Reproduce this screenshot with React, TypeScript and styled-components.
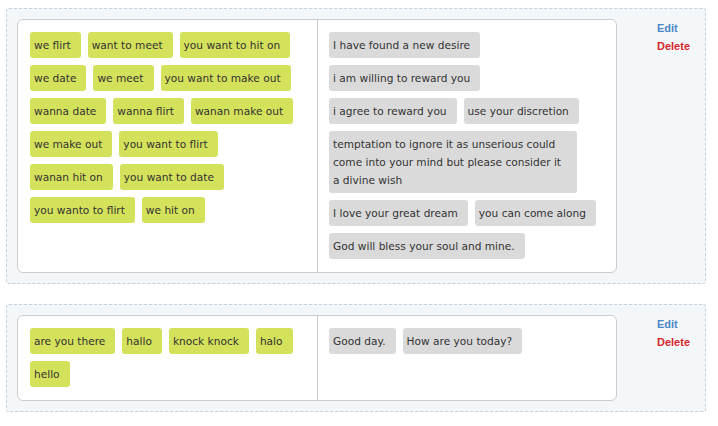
import React from "react";
import styled, { createGlobalStyle } from "styled-components";

const Global = createGlobalStyle`
  html, body { margin: 0; padding: 0; background: #ffffff; }
  body { font-family: "DejaVu Sans", "Lucida Grande", Verdana, sans-serif; color: #333; }
`;

const Page = styled.div`
  padding: 8px 12px 8px 6px;
  display: flex;
  flex-direction: column;
  gap: 20px;
`;

const Box = styled.div`
  width: 700px;
  box-sizing: border-box;
  display: flex;
  align-items: flex-start;
  padding: 10px;
  background: #f4f7fa;
  border: 1px dashed #c3d1de;
  border-radius: 3px;
`;

const Card = styled.div`
  width: 600px;
  box-sizing: border-box;
  display: flex;
  align-items: stretch;
  background: #ffffff;
  border: 1px solid #cccccc;
  border-radius: 6px;
`;

const TriggerColumn = styled.div`
  flex: 0 0 300px;
  box-sizing: border-box;
  display: flex;
  flex-wrap: wrap;
  align-content: flex-start;
  align-items: flex-start;
  gap: 7px;
  padding: 12px 12px 13px 12px;
  border-right: 1px solid #cccccc;
`;

const ReplyColumn = styled(TriggerColumn)`
  flex: 1 1 auto;
  padding-left: 11px;
  border-right: none;
`;

const Tag = styled.span<{ $kind: "trigger" | "reply" }>`
  display: inline-block;
  box-sizing: border-box;
  max-width: 248px;
  padding: 4px 10px 4px 4px;
  border-radius: 3px;
  font-size: 10.6px;
  line-height: 18px;
  color: #333333;
  background: ${(p) => (p.$kind === "trigger" ? "#d4e15a" : "#dadada")};
`;

const Actions = styled.div`
  display: flex;
  flex-direction: column;
  padding-left: 40px;
`;

const ActionLink = styled.a<{ $danger?: boolean }>`
  font-family: "Liberation Sans", Arial, sans-serif;
  font-weight: bold;
  font-size: 11px;
  line-height: 18px;
  text-decoration: none;
  cursor: pointer;
  color: ${(p) => (p.$danger ? "#d5282c" : "#4a86c8")};
`;

type Rule = { triggers: string[]; replies: string[] };

const rules: Rule[] = [
  {
    triggers: [
      "we flirt",
      "want to meet",
      "you want to hit on",
      "we date",
      "we meet",
      "you want to make out",
      "wanna date",
      "wanna flirt",
      "wanan make out",
      "we make out",
      "you want to flirt",
      "wanan hit on",
      "you want to date",
      "you wanto to flirt",
      "we hit on",
    ],
    replies: [
      "I have found a new desire",
      "i am willing to reward you",
      "i agree to reward you",
      "use your discretion",
      "temptation to ignore it as unserious could come into your mind but please consider it a divine wish",
      "I love your great dream",
      "you can come along",
      "God will bless your soul and mine.",
    ],
  },
  {
    triggers: ["are you there", "hallo", "knock knock", "halo", "hello"],
    replies: ["Good day.", "How are you today?"],
  },
];

export default function App() {
  return (
    <>
      <Global />
      <Page>
        {rules.map((r, i) => (
          <Box key={i}>
            <Card>
              <TriggerColumn>
                {r.triggers.map((t) => (
                  <Tag key={t} $kind="trigger">{t}</Tag>
                ))}
              </TriggerColumn>
              <ReplyColumn>
                {r.replies.map((t) => (
                  <Tag key={t} $kind="reply">{t}</Tag>
                ))}
              </ReplyColumn>
            </Card>
            <Actions>
              <ActionLink>Edit</ActionLink>
              <ActionLink $danger>Delete</ActionLink>
            </Actions>
          </Box>
        ))}
      </Page>
    </>
  );
}
